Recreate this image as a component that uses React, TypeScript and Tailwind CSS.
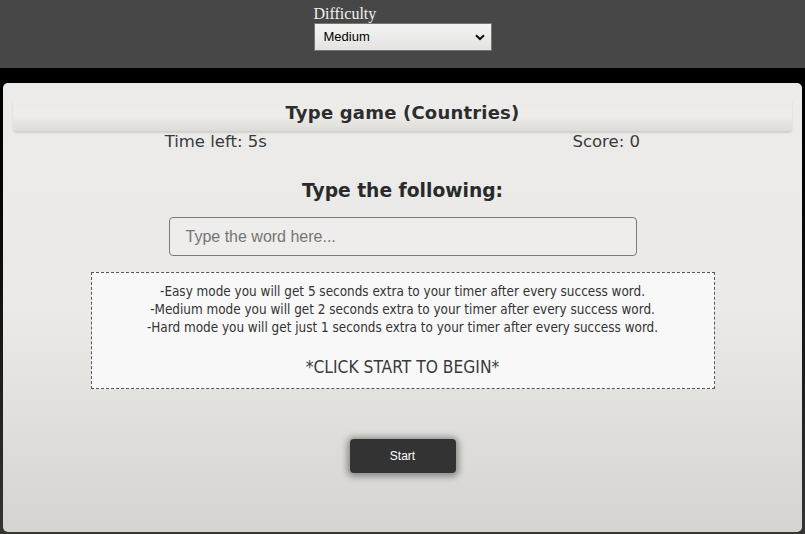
export default function App() {
  return (
    <div className="w-[805px] h-[534px] overflow-hidden bg-gradient-to-b from-[#000] to-[#353535] flex flex-col">
      <div className="h-[68px] bg-[#474747] flex flex-col items-center shrink-0">
        <div className="w-[178px] pt-[4px]">
          <div className="text-[16px] leading-[19px] text-[#f2f2f2] font-['Liberation_Serif',serif]">Difficulty</div>
          <div className="relative h-[28px] w-[178px] border border-[#767676] bg-gradient-to-b from-[#f4f4f2] to-[#e4e3e0] font-['Liberation_Sans',sans-serif] text-[13px] text-black flex items-center pl-[9px]">
            Medium
            <svg className="absolute right-[6px] top-[10px]" width="10" height="7" viewBox="0 0 10 7">
              <path d="M1 1.2 L5 5 L9 1.2" fill="none" stroke="#111" strokeWidth="2" />
            </svg>
          </div>
        </div>
      </div>
      <div className="h-[15px] shrink-0" />
      <div className="mx-[3px] h-[449px] rounded-[5px] bg-gradient-to-b from-[#ecebea] via-[#ebeae8] to-[#d5d4d0] flex flex-col items-center font-['DejaVu_Sans',sans-serif] text-[#333]">
        <div className="mt-[15px] w-[779px] h-[33px] rounded-[4px] bg-gradient-to-b from-[#ebeae9] via-[#eeedeb] to-[#dedcd8] shadow-[0_2px_2px_rgba(0,0,0,0.12)] flex items-center justify-center pb-[4px]">
          <span className="text-[18px] font-bold text-[#2d2d2d] tracking-[0.2px]">Type game (Countries)</span>
        </div>
        <div className="w-full flex text-[16.5px] text-[#3a3a3a] mt-[1px] h-[20px] items-center">
          <div className="w-1/2 text-center pl-[26px]">Time left: 5s</div>
          <div className="w-1/2 text-center pl-[8px]">Score: 0</div>
        </div>
        <div className="mt-[28px] text-[18.7px] font-bold text-[#2a2a2a] h-[22px] leading-[22px]">Type the following:</div>
        <div className="mt-[15px] w-[468px] h-[39px] rounded-[4px] border border-[#7a7a7a] bg-[#eeedeb] flex items-center pl-[16px] font-['Liberation_Sans',sans-serif] text-[16px] text-[#757575]">
          Type the word here...
        </div>
        <div className="mt-[16px] w-[624px] h-[117px] border border-dashed border-[#555] bg-[#f8f8f8] flex flex-col items-center pt-[10px] font-['DejaVu_Sans_Condensed','DejaVu_Sans',sans-serif] text-[#333]">
          <div className="text-[13.4px] leading-[18px]">-Easy mode you will get 5 seconds extra to your timer after every success word.</div>
          <div className="text-[13.4px] leading-[18px]">-Medium mode you will get 2 seconds extra to your timer after every success word.</div>
          <div className="text-[13.4px] leading-[18px]">-Hard mode you will get just 1 seconds extra to your timer after every success word.</div>
          <div className="mt-[20px] text-[17.3px] leading-[20px] text-[#3a3a3a]">*CLICK START TO BEGIN*</div>
        </div>
        <div className="mt-[50px] w-[106px] h-[34px] rounded-[4px] bg-[#333] shadow-[0_1px_6px_3px_rgba(0,0,0,0.35)] flex items-center justify-center text-white text-[12px] font-['Liberation_Sans',sans-serif]">
          Start
        </div>
      </div>
    </div>
  );
}
